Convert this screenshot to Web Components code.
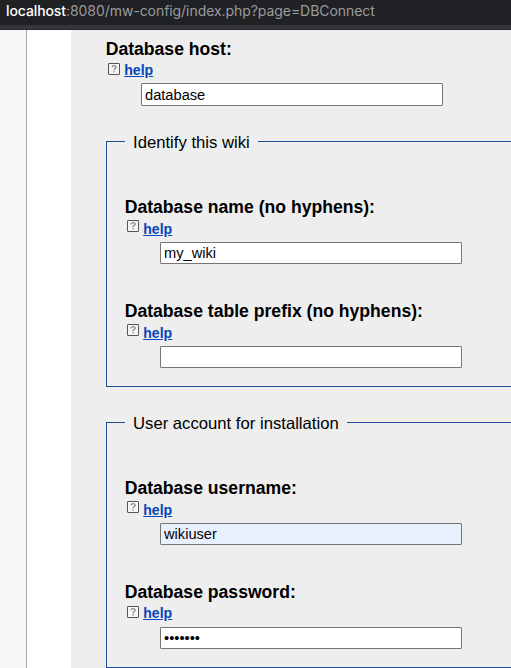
<!DOCTYPE html>
<html lang="en">
<head>
<meta charset="utf-8">
<title>Database connection</title>
<style>
html, body { margin: 0; height: 100%; overflow: hidden; }
body { font-family: "Liberation Sans", Arial, sans-serif; color: #000; }
</style>
</head>
<body>
<config-page>
  <address-bar slot="bar" host="localhost">:8080/mw-config/index.php?page=DBConnect</address-bar>
  <config-field label="Database host:" value="database" style="--input-h:23px;--icon-top:4px;--label-h:21px"></config-field>
  <field-group legend="Identify this wiki">
    <config-field label="Database name (no hyphens):" value="my_wiki"></config-field>
    <config-field label="Database table prefix (no hyphens):" value=""></config-field>
  </field-group>
  <field-group legend="User account for installation">
    <config-field label="Database username:" value="wikiuser" style="--fill:#e8f0fe"></config-field>
    <config-field label="Database password:" value="secrets" type="password" style="--icon-top:3px;--link-h:20px"></config-field>
  </field-group>
</config-page>
<script>
class Base extends HTMLElement {
  constructor() {
    super();
    this.attachShadow({ mode: "open" });
  }
  connectedCallback() { this.shadowRoot.innerHTML = this.render(); }
}

customElements.define("address-bar", class extends Base {
  render() {
    return `<style>
      :host { display: block; box-sizing: border-box; height: 30px; background: #202124;
        border-bottom: 1px solid #29292b; color: #9a9b9e;
        font: 14px/22px Inter, Roboto, sans-serif; white-space: nowrap; }
      .url { height: 25px; padding-left: 6px; letter-spacing: -.06px; }
      .strip { height: 4px; background: #35363a; }
      b { font-weight: 500; color: #fff; letter-spacing: -.1px; }
    </style><div class="url"><b>${this.getAttribute("host")}</b><slot></slot></div><div class="strip"></div>`;
  }
});

customElements.define("help-icon", class extends Base {
  render() {
    return `<style>:host { display: block; width: 12px; height: 12px; } svg { display: block; }</style>
    <svg width="12" height="12" viewBox="0 0 12 12" fill="none">
      <rect x=".5" y=".5" width="11" height="11" rx=".4" fill="#f7f7f7" stroke="#555"/>
      <path d="M4 4.2C4.2 2 8.2 2 8.1 4.2C8 5.6 6.1 5.4 6.1 7.2" stroke="#858585" stroke-width="1.3"/>
      <path d="M5.4 8.2h1.4v1.4H5.4z" fill="#858585"/>
    </svg>`;
  }
});

customElements.define("config-field", class extends Base {
  render() {
    return `<style>
      :host { display: block; }
      .label { height: var(--label-h, 22px); margin-left: -.3px; font-size: 17.6px; font-weight: 700; line-height: 22px; white-space: nowrap; }
      .help { display: flex; height: 24px; padding-left: 2px; gap: 4.2px; }
      help-icon { margin-top: var(--icon-top, 2px); }
      a { color: #0645b8; font-size: 14.1px; font-weight: 700; line-height: var(--link-h, 22px); text-decoration: underline; }
      input { display: block; box-sizing: border-box; width: 302px; height: var(--input-h, 22px); margin: 0 0 0 35px;
        padding: 1px 3px; border: 1px solid #767676; border-radius: 1px; background: var(--fill, #fff); color: #000;
        font: 14.65px "Liberation Sans", Arial, sans-serif; outline: 0; }
    </style>
    <div class="label">${this.getAttribute("label")}</div>
    <div class="help"><help-icon></help-icon><a href="#">help</a></div>
    <input type="${this.getAttribute("type") || "text"}" value="${this.getAttribute("value")}">`;
  }
});

customElements.define("field-group", class extends Base {
  render() {
    return `<style>
      :host { display: block; box-sizing: border-box; height: 246px; margin-top: 35px;
        border: solid #234b97; border-width: 0 0 1px 1px; }
      .head { display: flex; align-items: center; height: 1px; }
      .head i { height: 1px; width: 18px; background: #234b97; }
      .head i:last-child { flex: 1; }
      .head span { padding: 2px 8px 0; font-size: 16.68px; line-height: 20px; white-space: nowrap; }
      .body { display: flex; flex-direction: column; gap: 36px; padding: 54px 0 0 18px; }
    </style>
    <div class="head"><i></i><span>${this.getAttribute("legend")}</span><i></i></div>
    <div class="body"><slot></slot></div>`;
  }
});

customElements.define("config-page", class extends Base {
  render() {
    return `<style>
      :host { display: flex; flex-direction: column; height: 668px; }
      .main { flex: 1; min-height: 0; display: grid; grid-template-columns: 27px 44px 1fr; }
      .gutter { background: #f6f6f6; border-right: 1px solid #a7a7a7; }
      .paper { background: #fff; }
      .content { background: #eee; padding: 8px 0 0 35px; }
    </style>
    <slot name="bar"></slot>
    <div class="main"><div class="gutter"></div><div class="paper"></div><div class="content"><slot></slot></div></div>`;
  }
});
</script>
</body>
</html>
